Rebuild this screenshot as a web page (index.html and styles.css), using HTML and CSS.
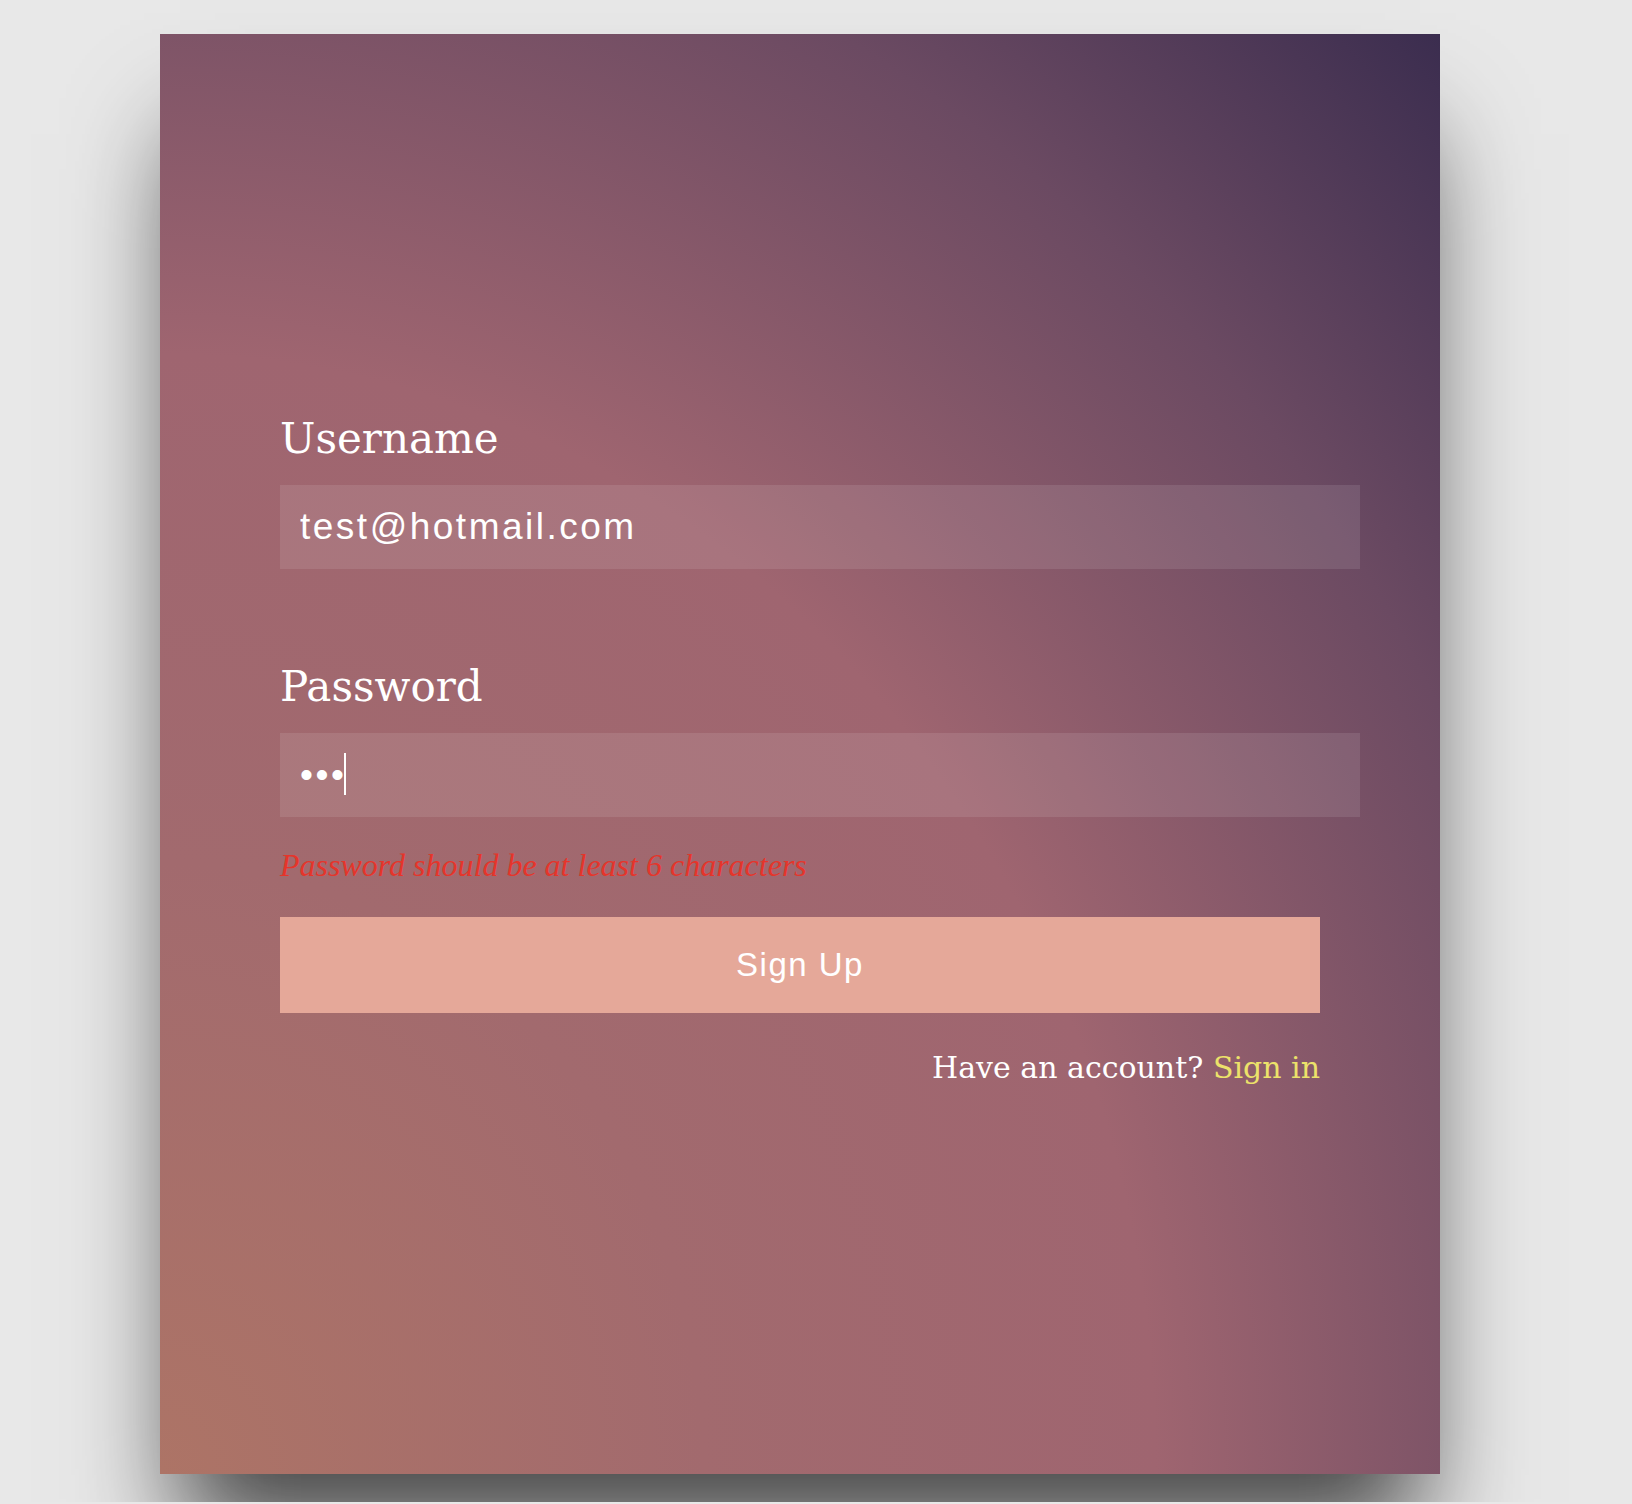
FILE: index.html
```html
<!DOCTYPE html>
<html lang="en">
<head>
<meta charset="utf-8">
<title>Sign Up</title>
<link rel="stylesheet" href="styles.css">
</head>
<body>
<div class="page">
  <div class="card">
    <form class="form">
      <div class="field">
        <label class="label" for="username">Username</label>
        <input class="input" id="username" type="text" value="test@hotmail.com">
      </div>
      <div class="field field-last">
        <label class="label" for="password">Password</label>
        <div class="input-wrap">
          <input class="input" id="password" type="password" value="abc">
          <span class="caret"></span>
        </div>
      </div>
      <p class="error">Password should be at least 6 characters</p>
      <button class="btn" type="button">Sign Up</button>
      <p class="switch">Have an account? <a class="switch-link" href="#">Sign in</a></p>
    </form>
  </div>
</div>
</body>
</html>
```
FILE: styles.css
```css
html, body {
  margin: 0;
  padding: 0;
  background: #e8e8e8;
}

.page {
  padding: 34px 0 28px 160px;
}

.card {
  width: 1280px;
  height: 1440px;
  box-sizing: border-box;
  padding: 381px 120px 0 120px;
  background: radial-gradient(ellipse farthest-corner at 0% 100%, #ad7466 0%, #a26a6e 30%, #9f6570 55%, #6b4a62 80%, #3b2d4f 100%);
  box-shadow: 0 80px 100px -20px rgba(0, 0, 0, 0.7);
}

.form {
  width: 1040px;
  display: flex;
  flex-direction: column;
}

.field {
  display: flex;
  flex-direction: column;
  margin-bottom: 94px;
}

.field-last {
  margin-bottom: 0;
}

.label {
  font-family: "DejaVu Serif", "Liberation Serif", serif;
  font-size: 42px;
  line-height: 48px;
  color: #ffffff;
  margin-bottom: 22px;
}

.input-wrap {
  position: relative;
  display: flex;
}

.input {
  flex-shrink: 0;
  box-sizing: content-box;
  width: 1040px;
  height: 84px;
  padding: 0 20px;
  margin: 0;
  border: 0;
  outline: none;
  background: rgba(255, 255, 255, 0.1);
  color: #ffffff;
  caret-color: #ffffff;
  font-family: "Liberation Sans", Arial, sans-serif;
  font-size: 37px;
  letter-spacing: 2.5px;
}

.caret {
  position: absolute;
  left: 64px;
  top: 20px;
  width: 2px;
  height: 42px;
  background: #ffffff;
}

.error {
  margin: 30px 0 0 0;
  font-family: "Liberation Serif", "Times New Roman", serif;
  font-style: italic;
  font-size: 32px;
  line-height: 36px;
  color: #e5352b;
}

.btn {
  margin-top: 34px;
  width: 1040px;
  height: 96px;
  border: 0;
  padding: 0;
  background: #e5a899;
  color: #ffffff;
  font-family: "Liberation Sans", Arial, sans-serif;
  font-size: 33px;
  letter-spacing: 1.5px;
  cursor: pointer;
}

.switch {
  margin: 35px 0 0 0;
  text-align: right;
  font-family: "DejaVu Serif", "Liberation Serif", serif;
  font-size: 30px;
  line-height: 40px;
  color: #ffffff;
}

.switch-link {
  color: #ece26a;
  text-decoration: none;
}
```
